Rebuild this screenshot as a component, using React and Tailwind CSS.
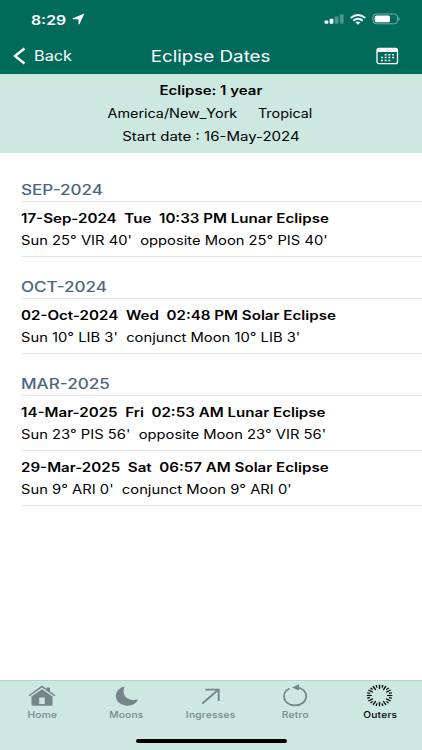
import React from "react";

const sections = [
  {
    title: "SEP-2024",
    rows: [
      {
        when: "17-Sep-2024  Tue  10:33 PM Lunar Eclipse",
        detail: "Sun 25° VIR 40'  opposite Moon 25° PIS 40'",
      },
    ],
  },
  {
    title: "OCT-2024",
    rows: [
      {
        when: "02-Oct-2024  Wed  02:48 PM Solar Eclipse",
        detail: "Sun 10° LIB 3'  conjunct Moon 10° LIB 3'",
      },
    ],
  },
  {
    title: "MAR-2025",
    rows: [
      {
        when: "14-Mar-2025  Fri  02:53 AM Lunar Eclipse",
        detail: "Sun 23° PIS 56'  opposite Moon 23° VIR 56'",
      },
      {
        when: "29-Mar-2025  Sat  06:57 AM Solar Eclipse",
        detail: "Sun 9° ARI 0'  conjunct Moon 9° ARI 0'",
      },
    ],
  },
];

function HomeIcon() {
  return (
    <svg width="28" height="22" viewBox="0 0 28 22" fill="currentColor">
      <path d="M0.5 10.2 14 .6l4.800 3.400V2.500h3.200v3.800l5.500 3.900-1 1.100L14 2.500 1.500 11.300z" />
      <path
        fillRule="evenodd"
        d="M14 4.200 24.500 11.600v7.900q0 1.200-1.400 1.200H4.900q-1.400 0-1.400-1.200v-7.900zM11.200 12.500v6.600h5.600v-6.600z"
      />
    </svg>
  );
}

function MoonIcon() {
  return (
    <svg width="24" height="22" viewBox="0 0 24 22" fill="currentColor">
      <path d="M9.600 1.400C4.300 2.600.8 6.500.8 11.100.8 16.600 5.900 20.700 12.300 20.700c5 0 9.200-2.400 10.800-6.200-1.200.3-2.500.5-4 .5-6 0-10.500-3.500-10.500-8.600 0-1.800.3-3.500 1-5z" />
    </svg>
  );
}

function ArrowIcon() {
  return (
    <svg
      width="22"
      height="22"
      viewBox="0 0 22 22"
      fill="none"
      stroke="currentColor"
      strokeWidth="1.900"
    >
      <path d="M2.300 18.500 18 5M5.200 4.600h13.500v11.400" />
    </svg>
  );
}

function RetroIcon() {
  return (
    <svg width="26" height="23" viewBox="0 0 26 23">
      <path
        d="M13.500 3.300C19.600 3.300 24.200 7 24.200 12.200s-4.700 9.200-11.100 9.200-11.100-3.900-11.100-9.200c0-3.400 2-6.200 5.600-7.700"
        fill="none"
        stroke="currentColor"
        strokeWidth="1.700"
      />
      <path d="M10 3.400 17 .300v6.200z" fill="currentColor" />
    </svg>
  );
}

function OutersIcon() {
  const ticks = Array.from({ length: 24 }, (_, i) => i * 15);
  return (
    <svg width="28" height="23" viewBox="0 0 28 23">
      <g
        transform="translate(13.500 11.500) scale(1.190 1)"
        stroke="currentColor"
        strokeWidth="1.150"
      >
        {ticks.map((deg) => (
          <line
            key={deg}
            x1="0"
            y1={deg % 30 ? -8.2 : -6.4}
            x2="0"
            y2="-10.8"
            transform={`rotate(${deg})`}
          />
        ))}
      </g>
    </svg>
  );
}

const tabs = [
  { label: "Home", Icon: HomeIcon },
  { label: "Moons", Icon: MoonIcon },
  { label: "Ingresses", Icon: ArrowIcon },
  { label: "Retro", Icon: RetroIcon },
  { label: "Outers", Icon: OutersIcon, active: true },
];

function StatusBar() {
  return (
    <div className="flex h-[38px] items-center justify-between pl-[31px] pr-[22px]">
      <div className="flex items-center">
        <span className="w-[41px]">
          <span className="inline-block origin-left scale-x-[1.17] text-[13.500px] font-semibold">
            8:29
          </span>
        </span>
        <svg width="13" height="12" viewBox="0 0 13 12" fill="#fff">
          <path d="M12.400.6 7.600 10.900q-.7 1-1.100-.2V6.200H1.100q-1.200-.3-.2-1z" />
        </svg>
      </div>
      <div className="flex items-center">
        <svg width="20" height="10" viewBox="0 0 20 10" fill="#fff">
          <rect x="0.500" y="6.500" width="3.800" height="3.300" rx="1" />
          <rect x="5.600" y="4.700" width="3.800" height="5.100" rx="1" />
          <rect x="10.700" y="2.500" width="3.800" height="7.300" rx="1" opacity="0.3" />
          <rect x="15.800" y="0.300" width="3.800" height="9.500" rx="1" opacity="0.3" />
        </svg>
        <svg
          className="ml-[6px]"
          width="16"
          height="11"
          viewBox="0 0 16 11"
          fill="none"
          stroke="#fff"
          strokeWidth="1.900"
        >
          <path d="M.7 4Q8-2 15.300 4M3.300 6.700q4.700-3.700 9.400 0" />
          <path d="M5.400 8.300q2.600-1.700 5.200 0L8 10.800z" fill="#fff" stroke="none" />
        </svg>
        <svg className="ml-[6px]" width="28" height="12" viewBox="0 0 28 12">
          <rect
            x="1"
            y="1"
            width="24.400"
            height="9.800"
            rx="3"
            fill="none"
            stroke="#fff"
            strokeOpacity="0.45"
          />
          <rect x="2.700" y="2.500" width="15.300" height="6.800" rx="1.600" fill="#fff" />
          <path d="M26.400 4v3.800q1.200-.6 1.200-1.900T26.400 4z" fill="#fff" opacity="0.5" />
        </svg>
      </div>
    </div>
  );
}

function NavBar() {
  return (
    <div className="grid h-9 grid-cols-[1fr_auto_1fr] items-center px-[13px]">
      <div className="flex items-center">
        <svg
          width="13"
          height="18"
          viewBox="0 0 13 18"
          fill="none"
          stroke="#fff"
          strokeWidth="2.300"
        >
          <path d="M11.500 1.500 2 9l9.500 7.500" />
        </svg>
        <span className="ml-[8px] inline-block origin-left scale-x-[1.18] text-[13.800px]">
          Back
        </span>
      </div>
      <h1 className="scale-x-[1.14] text-[16.500px] font-normal">Eclipse Dates</h1>
      <svg
        className="mr-[10px] justify-self-end"
        width="23"
        height="18"
        viewBox="0 0 23 18"
      >
        <rect
          x="1"
          y="1.300"
          width="20.500"
          height="15.400"
          rx="2"
          fill="none"
          stroke="#fff"
          strokeWidth="1.300"
        />
        <path d="M1 5V3q0-2 2-2h16.500q2 0 2 2v2z" fill="#fff" />
        <g stroke="#fff" strokeWidth="1.500" strokeDasharray="1.900 1.800">
          <path d="M8.700 7.800h9.500" />
          <path d="M5 10.600h13.200" />
          <path d="M5 13.500h9.500" />
        </g>
      </svg>
    </div>
  );
}

export default function App() {
  return (
    <div className="flex h-[750px] w-[422px] flex-col overflow-hidden bg-white font-['Inter',sans-serif] text-black">
      <header className="h-[74px] shrink-0 bg-[#006b5b] text-white">
        <StatusBar />
        <NavBar />
      </header>

      <div className="flex h-[78.500px] shrink-0 flex-col items-center bg-[#cde8e1] pt-[5px] text-[12.500px] leading-[23.200px]">
        <p className="scale-x-[1.2] font-semibold">Eclipse: 1 year</p>
        <p className="flex scale-x-[1.15] gap-[18px] pr-[2px]">
          <span>America/New_York</span>
          <span>Tropical</span>
        </p>
        <p className="scale-x-[1.2]">Start date : 16-May-2024</p>
      </div>

      <main className="flex-1 pl-[21px] pt-[7px]">
        {sections.map((section) => (
          <section key={section.title}>
            <h2 className="flex h-[42px] items-end border-b border-[#e4e4e6] pb-px text-[14px] font-medium leading-5 text-[#4a6580]">
              <span className="origin-left scale-x-[1.22]">{section.title}</span>
            </h2>
            {section.rows.map((row) => (
              <div
                key={row.when}
                className="flex h-[55.200px] flex-col items-start whitespace-pre border-b border-[#e4e4e6] pt-[6px] text-[12.500px] leading-[22px]"
              >
                <p className="origin-left scale-x-[1.21] font-semibold">{row.when}</p>
                <p className="origin-left scale-x-[1.18]">{row.detail}</p>
              </div>
            ))}
          </section>
        ))}
      </main>

      <footer className="flex h-[70px] shrink-0 flex-col items-center border-t border-[#b9d2cb] bg-[#cde8e1]">
        <nav className="grid w-full grid-cols-5">
          {tabs.map(({ label, Icon, active }) => (
            <div
              key={label}
              className={
                active
                  ? "flex flex-col items-center text-black"
                  : "flex flex-col items-center text-[#76858a]"
              }
            >
              <div className="flex h-[29px] items-center">
                <Icon />
              </div>
              <span className="scale-x-[1.2] text-[8.500px] font-medium leading-[11px] tracking-[0.200px]">
                {label}
              </span>
            </div>
          ))}
        </nav>
        <div className="mt-[18px] h-[4px] w-[151px] rounded-full bg-black" />
      </footer>
    </div>
  );
}
